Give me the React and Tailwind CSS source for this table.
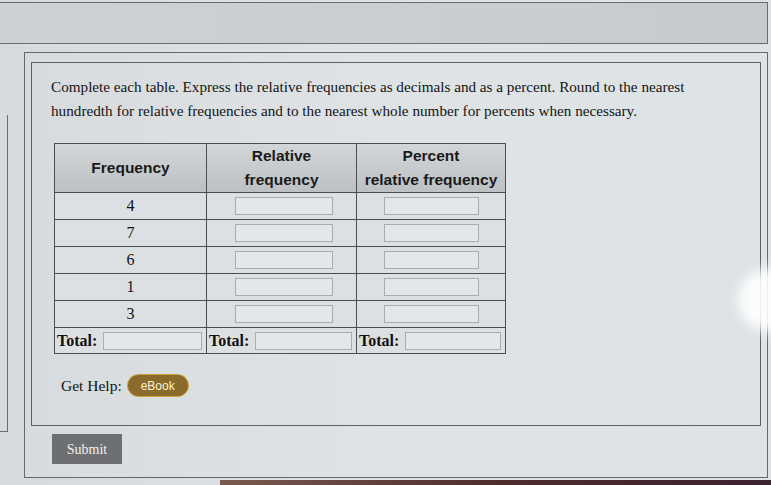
const ROWS = [4, 7, 6, 1, 3];

const serif = { fontFamily: '"Liberation Serif", "Times New Roman", serif' };

function Field({ className = '' }) {
  return <div className={`h-[18px] border border-[#a9adb0] bg-[#e4e7e9] ${className}`} />;
}

function TotalCell({ last }) {
  return (
    <td className={`h-[26px] border-r ${last ? 'border-r-0' : ''} border-[#4b4d4f] pl-[2px] pr-[4px]`}>
      <div className="flex items-center gap-[6px]">
        <span className="text-[16px] font-bold text-[#111]" style={serif}>
          Total:
        </span>
        <Field className="flex-1" />
      </div>
    </td>
  );
}

export default function App() {
  return (
    <div
      className="relative h-[485px] w-[771px] overflow-hidden bg-gradient-to-r from-[#d7dbde] via-[#dfe3e5] to-[#dde3e6] text-[#111]"
      style={serif}
    >
      {/* top strip */}
      <div className="ml-[-2px] mt-[2px] h-[42px] w-[770px] border border-[#6a6d70] bg-gradient-to-r from-[#cfd2d5] to-[#c7cbce]" />

      {/* left sidebar edge */}
      <div className="absolute left-0 top-[115px] h-[317px] w-[8px] border-b border-r border-[#6a6d70]" />

      {/* outer box */}
      <div className="ml-[24px] mt-[8px] h-[426px] w-[744px] border border-[#66696c] px-[6px] pt-[9px]">
        {/* inner box */}
        <div className="h-[364px] w-[730px] border border-[#5e6163] pl-[19px] pt-[12px]">
          <p className="text-[15.2px] leading-[24px] text-[#141414]">
            Complete each table. Express the relative frequencies as decimals and as a percent. Round to the nearest
            <br />
            hundredth for relative frequencies and to the nearest whole number for percents when necessary.
          </p>

          <table className="ml-[3px] mt-[20px] w-[451px] table-fixed border-collapse border border-[#4b4d4f]">
            <colgroup>
              <col className="w-[152px]" />
              <col className="w-[150px]" />
              <col className="w-[149px]" />
            </colgroup>
            <thead>
              <tr
                className="h-[49px] bg-gradient-to-b from-[#d3d6d8] to-[#bdc0c3] text-[15.5px] font-bold leading-[24px] text-[#1a1a1a]"
                style={{ fontFamily: '"Liberation Sans", Arial, sans-serif' }}
              >
                <th className="border border-[#4b4d4f]">Frequency</th>
                <th className="border border-[#4b4d4f]">
                  Relative
                  <br />
                  frequency
                </th>
                <th className="border border-[#4b4d4f]">
                  Percent
                  <br />
                  relative frequency
                </th>
              </tr>
            </thead>
            <tbody className="bg-[#dde0e2]">
              {ROWS.map((n, i) => (
                <tr key={i} className="h-[27px]">
                  <td className="border border-[#4b4d4f] text-center text-[16px]">{n}</td>
                  <td className="border border-[#4b4d4f]">
                    <Field className="ml-[28px] w-[98px]" />
                  </td>
                  <td className="border border-[#4b4d4f]">
                    <Field className="ml-[27px] w-[95px]" />
                  </td>
                </tr>
              ))}
              <tr className="border-t border-[#4b4d4f]">
                <TotalCell />
                <TotalCell />
                <TotalCell last />
              </tr>
            </tbody>
          </table>

          <div className="ml-[10px] mt-[20px] flex items-center gap-[5px]">
            <span className="text-[15.5px]">Get Help:</span>
            <span
              className="flex h-[23px] w-[62px] items-center justify-center rounded-full border border-[#c9a43c] bg-[#8c6a2b] text-[12px] text-[#fbf3cf]"
              style={{ fontFamily: '"Liberation Sans", Arial, sans-serif' }}
            >
              eBook
            </span>
          </div>
        </div>

        <button className="ml-[21px] mt-[8px] flex h-[30px] w-[70px] items-center justify-center bg-[#6d6f72] text-[14px] text-[#f2f2f2]">
          Submit
        </button>
      </div>

      {/* screen glare */}
      <div className="absolute left-[738px] top-[268px] h-[64px] w-[80px] rounded-full bg-white opacity-90 blur-[6px]" />
      {/* bottom bezel */}
      <div className="absolute bottom-0 left-[220px] h-[5px] w-[560px] bg-gradient-to-r from-[#7a5a50] via-[#4e2c2c] to-[#3a2230]" />
    </div>
  );
}
